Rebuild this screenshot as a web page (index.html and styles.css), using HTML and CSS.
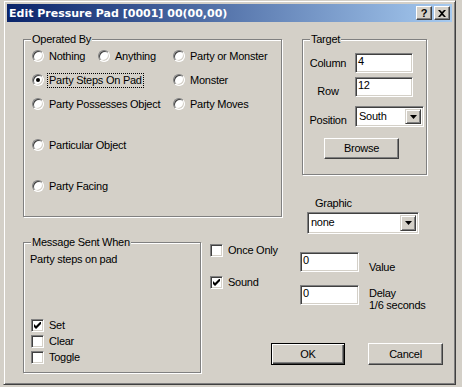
FILE: index.html
```html
<!DOCTYPE html>
<html lang="en">
<head>
  <meta charset="UTF-8">
  <title>Edit Pressure Pad</title>
  <link rel="stylesheet" href="styles.css">
</head>
<body>

  <div class="dialog">
    <div class="titlebar">
      <span class="title">Edit Pressure Pad [0001] 00(00,00)</span>
      <div class="tbtns">
        <span class="tbtn help">?</span>
        <span class="tbtn close">
          <svg width="8" height="7" viewBox="0 0 8 7"><path d="M0 0h2l2 2 2-2h2L5 3.5 8 7H6L4 5 2 7H0l3-3.5z" fill="#000"/></svg>
        </span>
      </div>
    </div>

    <div class="client">
      <div class="top">
        <div class="group opgroup">
          <span class="legend">Operated By</span>
          <div class="radios">
            <div class="opt"><span class="radio"></span><span class="txt">Nothing</span></div>
            <div class="opt"><span class="radio"></span><span class="txt">Anything</span></div>
            <div class="opt"><span class="radio"></span><span class="txt">Party or Monster</span></div>
            <div class="opt span2"><span class="radio checked"></span><span class="txt focus">Party Steps On Pad</span></div>
            <div class="opt"><span class="radio"></span><span class="txt">Monster</span></div>
            <div class="opt span2"><span class="radio"></span><span class="txt">Party Possesses Object</span></div>
            <div class="opt"><span class="radio"></span><span class="txt">Party Moves</span></div>
            <div class="opt full"><span class="radio"></span><span class="txt">Particular Object</span></div>
            <div class="opt full"><span class="radio"></span><span class="txt">Party Facing</span></div>
          </div>
        </div>

        <div class="rightcol">
          <div class="group target">
            <span class="legend">Target</span>
            <div class="field">
              <span class="flabel first">Column</span>
              <span class="edit small">4</span>
            </div>
            <div class="field row2">
              <span class="flabel">Row</span>
              <span class="edit small">12</span>
            </div>
            <div class="field row3">
              <span class="flabel">Position</span>
              <span class="combo pos"><span class="ctext">South</span><span class="drop"><svg width="7" height="4" viewBox="0 0 7 4"><path d="M0 0h7L3.5 4z" fill="#000"/></svg></span></span>
            </div>
            <span class="btn browse">Browse</span>
          </div>
          <div class="glabel">Graphic</div>
          <span class="combo graphic"><span class="ctext">none</span><span class="drop"><svg width="7" height="4" viewBox="0 0 7 4"><path d="M0 0h7L3.5 4z" fill="#000"/></svg></span></span>
        </div>
      </div>

      <div class="bottom">
        <div class="group msggroup">
          <span class="legend">Message Sent When</span>
          <div class="msgtext">Party steps on pad</div>
          <div class="checks">
            <div class="chk"><span class="box checked"><svg width="7" height="7" viewBox="0 0 7 7"><path d="M0 2v3l2 2 5-5V-1L2 4z" fill="#000"/></svg></span><span class="txt">Set</span></div>
            <div class="chk"><span class="box"></span><span class="txt">Clear</span></div>
            <div class="chk"><span class="box"></span><span class="txt">Toggle</span></div>
          </div>
        </div>

        <div class="rightarea">
          <div class="upper">
            <div class="flags">
              <div class="chk"><span class="box"></span><span class="txt">Once Only</span></div>
              <div class="chk sound"><span class="box checked"><svg width="7" height="7" viewBox="0 0 7 7"><path d="M0 2v3l2 2 5-5V-1L2 4z" fill="#000"/></svg></span><span class="txt">Sound</span></div>
            </div>
            <div class="values">
              <div class="valrow">
                <span class="edit num">0</span>
                <span class="vlabel">Value</span>
              </div>
              <div class="valrow delay">
                <span class="edit num">0</span>
                <span class="vlabel two">Delay<br>1/6 seconds</span>
              </div>
            </div>
          </div>
          <div class="buttons">
            <span class="btn default">OK</span>
            <span class="btn cancel">Cancel</span>
          </div>
        </div>
      </div>
    </div>
  </div>

</body>
</html>
```

FILE: styles.css
```css
body {
  margin: 0;
  width: 462px;
  height: 387px;
  overflow: hidden;
  background: #d4d0c8;
  font-family: 'Liberation Sans', Arial, sans-serif;
  font-size: 11px;
  line-height: 13px;
  letter-spacing: -0.25px;
  color: #000;
}

.dialog {
  box-sizing: border-box;
  width: 453px;
  height: 385px;
  margin-left: 3px;
  padding: 3px;
  border: 1px solid;
  border-color: #d4d0c8 #404040 #404040 #d4d0c8;
  box-shadow: inset 1px 1px 0 #fff, inset -1px -1px 0 #808080;
}

/* title bar */
.titlebar {
  height: 18px;
  display: flex;
  align-items: center;
  justify-content: space-between;
  padding-left: 2px;
  background: linear-gradient(to right, #0a246a, #a6caf0);
}
.title {
  color: #fff;
  font-family: 'DejaVu Sans', sans-serif;
  font-weight: bold;
  font-size: 11px;
  letter-spacing: 0;
}
.tbtns {
  display: flex;
  gap: 2px;
  margin-right: 2px;
}
.tbtn {
  box-sizing: border-box;
  width: 16px;
  height: 14px;
  display: flex;
  align-items: center;
  justify-content: center;
  background: #d4d0c8;
  border: 1px solid;
  border-color: #fff #404040 #404040 #fff;
  box-shadow: inset -1px -1px 0 #808080;
  font-weight: bold;
  font-size: 11px;
}

/* group boxes */
.group {
  position: relative;
  box-sizing: border-box;
  border: 1px solid #808080;
  box-shadow: inset 1px 1px 0 #fff, 1px 1px 0 #fff;
}
.legend {
  position: absolute;
  top: -7px;
  left: 7px;
  padding: 0 1px;
  background: #d4d0c8;
}

.top {
  display: flex;
  margin-top: 17px;
}
.opgroup {
  width: 259px;
  height: 178px;
  margin-left: 16px;
}
.radios {
  display: grid;
  grid-template-columns: 66px 75px 1fr;
  grid-template-rows: 24px 24px 41px 41px 16px;
  padding: 8px 0 0 8px;
}
.opt {
  display: flex;
  align-items: center;
  gap: 4px;
  height: 16px;
  white-space: nowrap;
}
.span2 { grid-column: 1 / 3; }
.full { grid-column: 1 / 4; }
.txt { padding: 0 1px; }
.focus { outline: 1px dotted #000; }

.radio {
  position: relative;
  box-sizing: border-box;
  width: 12px;
  height: 12px;
  flex: none;
  border-radius: 50%;
  background: #fff;
  border: 1px solid;
  border-color: #808080 #fff #fff #808080;
  box-shadow: inset 1px 1px 0 #404040, inset -1px -1px 0 #d4d0c8;
}
.radio.checked::after {
  content: "";
  position: absolute;
  left: 3px;
  top: 3px;
  width: 4px;
  height: 4px;
  border-radius: 50%;
  background: #000;
}

/* sunken fields */
.edit, .combo {
  box-sizing: border-box;
  display: flex;
  align-items: flex-start;
  padding: 1px 2px;
  background: #fff;
  border: 1px solid;
  border-color: #808080 #fff #fff #808080;
  box-shadow: inset 1px 1px 0 #404040, inset -1px -1px 0 #d4d0c8;
}
.edit.small { width: 58px; height: 20px; }
.edit.num { width: 59px; height: 20px; }

.combo {
  justify-content: space-between;
  padding: 2px;
}
.ctext { padding: 1px 0 0 1px; }
.drop {
  box-sizing: border-box;
  width: 16px;
  height: 100%;
  display: flex;
  align-items: center;
  justify-content: center;
  background: #d4d0c8;
  border: 1px solid;
  border-color: #d4d0c8 #404040 #404040 #d4d0c8;
  box-shadow: inset 1px 1px 0 #fff, inset -1px -1px 0 #808080;
}
.combo.pos { width: 69px; height: 21px; }
.combo.graphic { width: 112px; height: 22px; margin-left: 5px; margin-top: 2px; }

/* raised buttons */
.btn {
  box-sizing: border-box;
  display: flex;
  align-items: center;
  justify-content: center;
  height: 21px;
  background: #d4d0c8;
  border: 1px solid;
  border-color: #fff #404040 #404040 #fff;
  box-shadow: inset -1px -1px 0 #808080;
}
.btn.default {
  border-color: #000;
  box-shadow: inset 1px 1px 0 #fff, inset -1px -1px 0 #404040, inset -2px -2px 0 #808080;
}

/* target */
.rightcol {
  display: flex;
  flex-direction: column;
  margin-left: 20px;
}
.target {
  width: 125px;
  height: 136px;
  padding: 13px 0 0 2px;
}
.field {
  display: flex;
  align-items: flex-start;
  gap: 4px;
}
.flabel {
  width: 46px;
  text-align: center;
  margin-top: 8px;
}
.flabel.first { margin-top: 4px; }
.row2 { margin-top: 4px; }
.row3 { margin-top: 8px; }
.browse {
  width: 75px;
  margin: 11px 0 0 19px;
}
.glabel {
  margin: 22px 0 0 13px;
}

/* bottom part */
.bottom {
  display: flex;
  margin-top: 8px;
}
.msggroup {
  width: 178px;
  height: 131px;
  margin-left: 16px;
  display: flex;
  flex-direction: column;
  justify-content: space-between;
  padding: 10px 0 7px 6px;
}
.checks {
  padding-left: 1px;
}
.chk {
  display: flex;
  align-items: center;
  gap: 4px;
  height: 16px;
}
.box {
  box-sizing: border-box;
  width: 13px;
  height: 13px;
  flex: none;
  display: flex;
  align-items: center;
  justify-content: center;
  background: #fff;
  border: 1px solid;
  border-color: #808080 #fff #fff #808080;
  box-shadow: inset 1px 1px 0 #404040, inset -1px -1px 0 #d4d0c8;
}

.rightarea {
  margin-left: 9px;
}
.upper {
  display: flex;
}
.flags {
  width: 90px;
}
.sound { margin-top: 16px; }
.values {
  margin-top: 10px;
}
.valrow {
  display: flex;
  align-items: flex-start;
  gap: 10px;
}
.vlabel { margin-top: 9px; }
.valrow.delay { margin-top: 11px; }
.vlabel.two {
  margin-top: 2px;
  line-height: 12px;
}
.buttons {
  display: flex;
  gap: 23px;
  margin: 32px 0 0 61px;
}
.buttons .btn { height: 22px; }
.btn.default { width: 74px; }
.btn.cancel { width: 75px; }
```
